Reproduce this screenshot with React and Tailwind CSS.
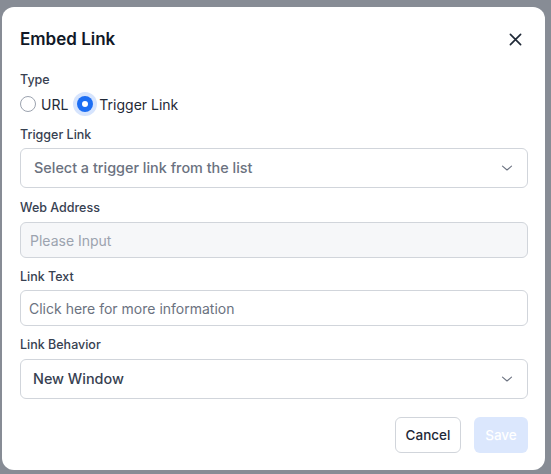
import React from "react";

function Chevron() {
  return (
    <svg width="12" height="8" viewBox="0 0 12 8" fill="none" className="shrink-0">
      <path d="M1.5 2.2 L6 6 L10.5 2.2" stroke="#6b7280" strokeWidth="1.1" strokeLinecap="round" strokeLinejoin="round" />
    </svg>
  );
}

export default function App() {
  return (
    <div
      className="w-[551px] h-[474px] bg-[#878c95] pt-[7px] pl-[2px] overflow-hidden"
      style={{ fontFamily: "Inter, 'Noto Sans', sans-serif" }}
    >
      <div className="w-[543px] h-[463px] bg-white rounded-[12px] pl-[18px] pr-[17px] pt-[18px] flex flex-col">
        <div className="h-7 flex items-center justify-between">
          <h2 className="text-[17px] font-semibold text-[#111827] leading-7">Embed Link</h2>
          <svg width="13" height="13" viewBox="0 0 14 14" className="mr-[6px]">
            <path d="M1.5 1.5 L12.5 12.5 M12.5 1.5 L1.5 12.5" stroke="#1f2937" strokeWidth="1.8" strokeLinecap="round" />
          </svg>
        </div>

        <div className="mt-[17px] text-[12.5px] font-medium text-[#374151] leading-5">Type</div>
        <div className="mt-[2px] h-6 flex items-center text-[14px] text-[#1f2937]">
          <span className="w-4 h-4 rounded-full border border-[#9ca3af] bg-white" />
          <span className="ml-[5px]">URL</span>
          <span className="ml-[5px] w-[24px] h-[24px] rounded-full bg-[#d6e4fd] flex items-center justify-center">
            <span className="w-4 h-4 rounded-full bg-[#1d6ef3] flex items-center justify-center">
              <span className="w-[6px] h-[6px] rounded-full bg-white" />
            </span>
          </span>
          <span className="ml-[2px]">Trigger Link</span>
        </div>

        <div className="mt-[9px] text-[12.5px] font-medium text-[#374151] leading-5">Trigger Link</div>
        <div className="mt-[3px] h-10 rounded-[6px] border border-[#d1d5db] flex items-center justify-between pl-[13px] pr-[14px]">
          <span className="text-[14.4px] font-medium text-[#6b7280]">Select a trigger link from the list</span>
          <Chevron />
        </div>

        <div className="mt-[10px] text-[12.5px] font-medium text-[#374151] leading-5">Web Address</div>
        <div className="mt-[4px] h-9 rounded-[6px] border border-[#d1d5db] bg-[#f6f7f9] flex items-center pl-[9px]">
          <span className="text-[14px] text-[#9ca3af]">Please Input</span>
        </div>

        <div className="mt-[9px] text-[12.5px] font-medium text-[#374151] leading-5">Link Text</div>
        <div className="mt-[3px] h-9 rounded-[6px] border border-[#d1d5db] bg-white flex items-center pl-[8px]">
          <span className="text-[14px] text-[#6b7280]">Click here for more information</span>
        </div>

        <div className="mt-[9px] text-[12.5px] font-medium text-[#374151] leading-5">Link Behavior</div>
        <div className="mt-[4px] h-10 rounded-[6px] border border-[#d1d5db] flex items-center justify-between pl-[12px] pr-[14px]">
          <span className="text-[14.4px] font-medium text-[#374151]">New Window</span>
          <Chevron />
        </div>

        <div className="mt-[18px] flex justify-end gap-[13px]">
          <button className="h-9 w-[66px] rounded-[6px] border border-[#d1d5db] bg-white text-[13.5px] font-medium text-[#1f2937]">
            Cancel
          </button>
          <button className="h-9 w-[54px] rounded-[6px] bg-[#dbe7fd] text-[13.5px] font-medium text-white">
            Save
          </button>
        </div>
      </div>
    </div>
  );
}
